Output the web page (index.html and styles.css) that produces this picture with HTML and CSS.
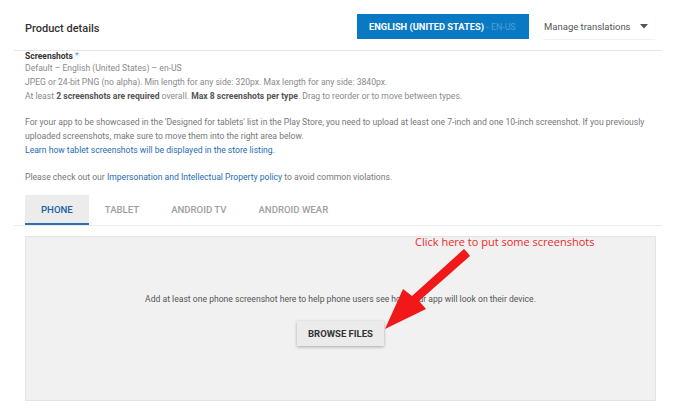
FILE: index.html
```html
<!DOCTYPE html>
<html>
<head>
<meta charset="utf-8">
<link rel="stylesheet" href="styles.css">
</head>
<body>
<div class="page">
  <header class="top">
    <h1 class="title">Product details</h1>
    <div class="actions">
      <div class="lang">ENGLISH (UNITED STATES) <span class="code">- EN-US</span></div>
      <div class="manage">
        <span>Manage translations</span>
        <svg class="caret" width="8" height="5" viewBox="0 0 8 5"><path d="M0 0h8L4 4.5z" fill="#555"/></svg>
      </div>
    </div>
  </header>

  <section class="content">
    <div class="field">
      <div class="label">Screenshots <span class="req">*</span></div>
      <div class="line">Default – English (United States) – en-US</div>
      <div class="line">JPEG or 24-bit PNG (no alpha). Min length for any side: 320px. Max length for any side: 3840px.</div>
      <div class="line">At least <b>2 screenshots are required</b> overall. <b>Max 8 screenshots per type</b>. Drag to reorder or to move between types.</div>
    </div>
    <p class="para">For your app to be showcased in the 'Designed for tablets' list in the Play Store, you need to upload at least one 7-inch and one 10-inch screenshot. If you previously uploaded screenshots, make sure to move them into the right area below.<br><a class="link">Learn how tablet screenshots will be displayed in the store listing.</a></p>
    <p class="para policy">Please check out our <a class="link">Impersonation and Intellectual Property policy</a> to avoid common violations.</p>
  </section>

  <nav class="tabs">
    <div class="tab active">PHONE</div>
    <div class="tab">TABLET</div>
    <div class="tab">ANDROID TV</div>
    <div class="tab">ANDROID WEAR</div>
  </nav>

  <div class="zone-wrap">
    <div class="dropzone">
      <div class="hint">Add at least one phone screenshot here to help phone users see how your app will look on their device.</div>
      <div class="browse">BROWSE FILES</div>
    </div>
    <div class="note">Click here to put some screenshots</div>
    <svg class="arrow" width="120" height="90" viewBox="0 0 120 90">
      <path d="M96 3 L99 7 L48 52 L55 60 L14 80 L32 40 L41 47 L93 0 Z" fill="#f01818"/>
    </svg>
  </div>
</div>
</body>
</html>
```

FILE: styles.css
```css
* { box-sizing: border-box; }
html, body { margin: 0; padding: 0; background: #fff; }
body {
  font-family: Roboto, "Liberation Sans", sans-serif;
  font-size: 8.6px;
  color: #777;
  width: 676px;
  height: 411px;
  overflow: hidden;
}
.page { margin: 0 14px; }

.top {
  height: 51px;
  border-bottom: 1px solid #e6e6e6;
  display: flex;
  align-items: flex-start;
  padding-left: 11px;
  padding-right: 7px;
}
.title {
  margin: 22px 0 0 0;
  font-size: 11px;
  font-weight: 500;
  color: #333;
  line-height: 14px;
}
.actions {
  margin-left: auto;
  margin-top: 14px;
  display: flex;
  gap: 14px;
}
.lang {
  width: 172px;
  height: 25px;
  background: #0a79c3;
  color: #fff;
  font-weight: 700;
  font-size: 9.3px;
  line-height: 25px;
  padding-left: 12px;
  white-space: nowrap;
}
.lang .code { color: #4aa0d8; font-weight: 400; font-size: 8.8px; }
.manage {
  width: 112px;
  height: 25px;
  display: flex;
  align-items: center;
  justify-content: space-between;
  padding: 0 7px 0 1px;
  font-size: 9.5px;
  color: #555;
  box-shadow: 0 1px 1px rgba(0,0,0,0.06);
}
.caret { display: block; }

.content { padding: 0 6px 0 11px; }
.field { margin-top: 0; }
.label {
  font-weight: 700;
  color: #333;
  font-size: 8.5px;
  line-height: 10px;
}
.req { color: #4aa0d8; font-weight: 400; }
.line { line-height: 14px; color: #8a8a8a; }
.line b { color: #555; font-weight: 700; }
.para { margin: 12px 0 0 0; line-height: 14px; color: #777; }
.para.policy { margin-top: 13px; }
.link { color: #1e6db3; }

.tabs {
  margin-top: 11px;
  display: flex;
  padding-left: 11px;
  border-bottom: 1px solid #ececec;
}
.tab {
  height: 30px;
  padding: 0 16px;
  display: flex;
  align-items: center;
  font-size: 9.6px;
  font-weight: 500;
  color: #a0a0a0;
  border-bottom: 2px solid transparent;
}
.tab.active {
  background: #ececec;
  color: #1a5fa8;
  border-bottom-color: #2d6fb0;
}

.zone-wrap {
  position: relative;
  margin-top: 10px;
  padding: 0 6px 0 11px;
}
.dropzone {
  height: 165px;
  background: #f1f1f1;
  border: 1px solid #e4e4e4;
  display: flex;
  flex-direction: column;
  align-items: center;
  justify-content: center;
}
.hint { line-height: 14px; color: #555; }
.browse {
  margin-top: 15px;
  width: 87px;
  height: 25px;
  background: #ebebeb;
  box-shadow: 0 1px 3px rgba(0,0,0,0.3);
  color: #333;
  font-weight: 700;
  font-size: 9.5px;
  display: flex;
  align-items: center;
  justify-content: center;
}
.note {
  position: absolute;
  left: 401px;
  top: -1px;
  font-family: "Open Sans", "Liberation Sans", sans-serif;
  font-size: 11px;
  color: #ee2a2a;
  line-height: 14px;
  white-space: nowrap;
}
.arrow {
  position: absolute;
  left: 357px;
  top: 13px;
}
```
